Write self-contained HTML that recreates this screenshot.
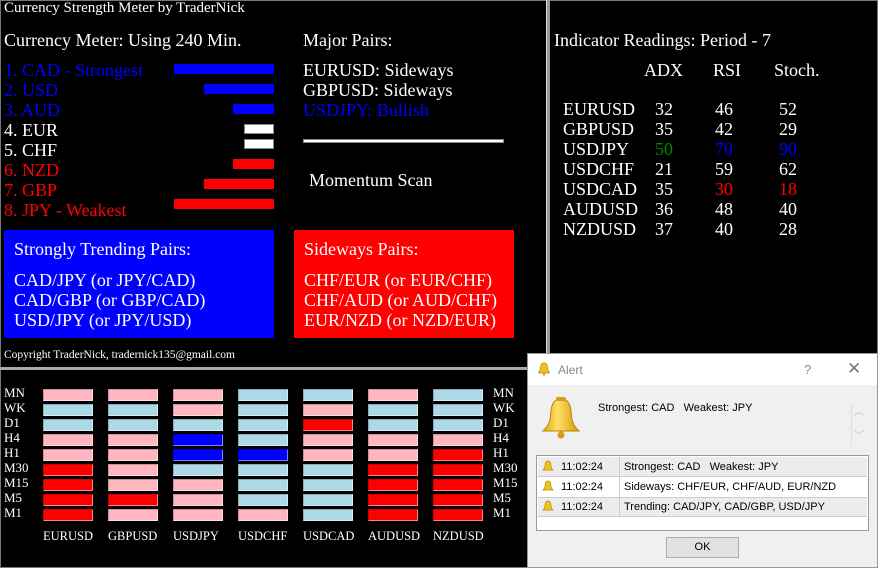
<!DOCTYPE html>
<html><head><meta charset="utf-8"><style>
*{margin:0;padding:0;box-sizing:border-box}
body{width:878px;height:568px;background:#000;position:relative;overflow:hidden;font-family:"Liberation Serif",serif;color:#fff}
.a{position:absolute;white-space:nowrap}
.t{font-size:18px;line-height:20px}
.b{position:absolute}
.g{position:absolute;width:50px;height:12px;border:1px solid rgba(0,0,0,.2);border-right-color:rgba(255,255,255,.5);border-bottom-color:rgba(255,255,255,.5)}
.p{background:#ffb6c1}.l{background:#add8e6}.r{background:#f00}.u{background:#00f}
.gl{position:absolute;font-size:13px;line-height:15px}
.dlg{position:absolute;left:527px;top:353px;width:351px;height:215px;background:#f0f0f0;border:1px solid #999;font-family:"Liberation Sans",sans-serif;font-size:11px;color:#000}
</style></head><body>
<div class="b" style="left:0;top:0;width:878px;height:568px;border:1px solid #777"></div>
<div class="b" style="left:546px;top:0;width:4px;height:370px;background:#999;border-left:1px solid #ddd"></div>
<div class="b" style="left:0;top:367px;width:548px;height:3px;background:#aaa"></div>

<div class="a" style="left:4px;top:0px;font-size:15px">Currency Strength Meter by TraderNick</div>
<div class="a t" style="left:4px;top:30px">Currency Meter: Using 240 Min.</div>
<div class="a t" style="left:303px;top:30px">Major Pairs:</div>

<div class="a t" style="left:4px;top:60px;color:#00f">1. CAD - Strongest</div>
<div class="a t" style="left:4px;top:80px;color:#00f">2. USD</div>
<div class="a t" style="left:4px;top:100px;color:#00f">3. AUD</div>
<div class="a t" style="left:4px;top:120px">4. EUR</div>
<div class="a t" style="left:4px;top:140px">5. CHF</div>
<div class="a t" style="left:4px;top:160px;color:#f00">6. NZD</div>
<div class="a t" style="left:4px;top:180px;color:#f00">7. GBP</div>
<div class="a t" style="left:4px;top:200px;color:#f00">8. JPY - Weakest</div>

<div class="b u" style="left:174px;top:64px;width:100px;height:10px"></div>
<div class="b u" style="left:204px;top:84px;width:70px;height:10px"></div>
<div class="b u" style="left:233px;top:104px;width:41px;height:10px"></div>
<div class="b" style="left:244px;top:124px;width:30px;height:10px;background:#fff;border:1px solid #888"></div>
<div class="b" style="left:244px;top:139px;width:30px;height:10px;background:#fff;border:1px solid #888"></div>
<div class="b r" style="left:233px;top:159px;width:41px;height:10px"></div>
<div class="b r" style="left:204px;top:179px;width:70px;height:10px"></div>
<div class="b r" style="left:174px;top:199px;width:100px;height:10px"></div>

<div class="a t" style="left:303px;top:60px">EURUSD: Sideways</div>
<div class="a t" style="left:303px;top:80px">GBPUSD: Sideways</div>
<div class="a t" style="left:303px;top:100px;color:#00f">USDJPY: Bullish</div>
<div class="b" style="left:303px;top:139px;width:201px;height:4px;background:#fff;border:1px solid #888"></div>
<div class="a t" style="left:309px;top:170px">Momentum Scan</div>

<div class="b u" style="left:4px;top:230px;width:270px;height:108px"></div>
<div class="a t" style="left:14px;top:239px">Strongly Trending Pairs:</div>
<div class="a t" style="left:14px;top:270px">CAD/JPY (or JPY/CAD)<br>CAD/GBP (or GBP/CAD)<br>USD/JPY (or JPY/USD)</div>
<div class="b r" style="left:294px;top:230px;width:220px;height:108px"></div>
<div class="a t" style="left:304px;top:239px">Sideways Pairs:</div>
<div class="a t" style="left:304px;top:270px">CHF/EUR (or EUR/CHF)<br>CHF/AUD (or AUD/CHF)<br>EUR/NZD (or NZD/EUR)</div>
<div class="a" style="left:4px;top:349px;font-size:11.5px">Copyright TraderNick, tradernick135@gmail.com</div>

<div class="a t" style="left:554px;top:30px">Indicator Readings: Period - 7</div>
<div class="a t" style="left:644px;top:60px">ADX</div>
<div class="a t" style="left:713px;top:60px">RSI</div>
<div class="a t" style="left:774px;top:60px">Stoch.</div>
<div class="a t" style="left:563px;top:99px">EURUSD<br>GBPUSD<br>USDJPY<br>USDCHF<br>USDCAD<br>AUDUSD<br>NZDUSD</div>
<div class="a t" style="left:655px;top:99px">32<br>35<br><span style="color:#080">50</span><br>21<br>35<br>36<br>37</div>
<div class="a t" style="left:715px;top:99px">46<br>42<br><span style="color:#00f">70</span><br>59<br><span style="color:#f00">30</span><br>48<br>40</div>
<div class="a t" style="left:779px;top:99px">52<br>29<br><span style="color:#00f">90</span><br>62<br><span style="color:#f00">18</span><br>40<br>28</div>

<div class="gl" style="left:4px;top:385px">MN<br>WK<br>D1<br>H4<br>H1<br>M30<br>M15<br>M5<br>M1</div>
<div class="gl" style="left:493px;top:385px">MN<br>WK<br>D1<br>H4<br>H1<br>M30<br>M15<br>M5<br>M1</div>

<div class="g p" style="left:43px;top:389px"></div><div class="g l" style="left:43px;top:404px"></div><div class="g l" style="left:43px;top:419px"></div><div class="g p" style="left:43px;top:434px"></div><div class="g p" style="left:43px;top:449px"></div><div class="g r" style="left:43px;top:464px"></div><div class="g r" style="left:43px;top:479px"></div><div class="g r" style="left:43px;top:494px"></div><div class="g r" style="left:43px;top:509px"></div>
<div class="g p" style="left:108px;top:389px"></div><div class="g l" style="left:108px;top:404px"></div><div class="g l" style="left:108px;top:419px"></div><div class="g p" style="left:108px;top:434px"></div><div class="g p" style="left:108px;top:449px"></div><div class="g p" style="left:108px;top:464px"></div><div class="g p" style="left:108px;top:479px"></div><div class="g r" style="left:108px;top:494px"></div><div class="g p" style="left:108px;top:509px"></div>
<div class="g p" style="left:173px;top:389px"></div><div class="g p" style="left:173px;top:404px"></div><div class="g l" style="left:173px;top:419px"></div><div class="g u" style="left:173px;top:434px"></div><div class="g u" style="left:173px;top:449px"></div><div class="g l" style="left:173px;top:464px"></div><div class="g p" style="left:173px;top:479px"></div><div class="g p" style="left:173px;top:494px"></div><div class="g p" style="left:173px;top:509px"></div>
<div class="g l" style="left:238px;top:389px"></div><div class="g l" style="left:238px;top:404px"></div><div class="g l" style="left:238px;top:419px"></div><div class="g l" style="left:238px;top:434px"></div><div class="g u" style="left:238px;top:449px"></div><div class="g l" style="left:238px;top:464px"></div><div class="g l" style="left:238px;top:479px"></div><div class="g l" style="left:238px;top:494px"></div><div class="g p" style="left:238px;top:509px"></div>
<div class="g l" style="left:303px;top:389px"></div><div class="g p" style="left:303px;top:404px"></div><div class="g r" style="left:303px;top:419px"></div><div class="g p" style="left:303px;top:434px"></div><div class="g p" style="left:303px;top:449px"></div><div class="g l" style="left:303px;top:464px"></div><div class="g l" style="left:303px;top:479px"></div><div class="g l" style="left:303px;top:494px"></div><div class="g l" style="left:303px;top:509px"></div>
<div class="g p" style="left:368px;top:389px"></div><div class="g l" style="left:368px;top:404px"></div><div class="g l" style="left:368px;top:419px"></div><div class="g p" style="left:368px;top:434px"></div><div class="g p" style="left:368px;top:449px"></div><div class="g r" style="left:368px;top:464px"></div><div class="g r" style="left:368px;top:479px"></div><div class="g r" style="left:368px;top:494px"></div><div class="g r" style="left:368px;top:509px"></div>
<div class="g l" style="left:433px;top:389px"></div><div class="g l" style="left:433px;top:404px"></div><div class="g l" style="left:433px;top:419px"></div><div class="g p" style="left:433px;top:434px"></div><div class="g r" style="left:433px;top:449px"></div><div class="g r" style="left:433px;top:464px"></div><div class="g r" style="left:433px;top:479px"></div><div class="g r" style="left:433px;top:494px"></div><div class="g r" style="left:433px;top:509px"></div>

<div class="gl" style="left:43px;top:529px;font-size:12.5px">EURUSD</div>
<div class="gl" style="left:108px;top:529px;font-size:12.5px">GBPUSD</div>
<div class="gl" style="left:173px;top:529px;font-size:12.5px">USDJPY</div>
<div class="gl" style="left:238px;top:529px;font-size:12.5px">USDCHF</div>
<div class="gl" style="left:303px;top:529px;font-size:12.5px">USDCAD</div>
<div class="gl" style="left:368px;top:529px;font-size:12.5px">AUDUSD</div>
<div class="gl" style="left:433px;top:529px;font-size:12.5px">NZDUSD</div>

<div class="dlg">
 <div style="position:absolute;left:0;top:0;width:349px;height:31px;background:#fff"></div>
 <svg style="position:absolute;left:9px;top:8px" width="14" height="14" viewBox="0 0 14 14"><path d="M7 1C4 1 3.5 4 3.5 6.5 3.5 9 2 10 1.5 11H12.5C12 10 10.5 9 10.5 6.5 10.5 4 10 1 7 1Z" fill="#f0c419" stroke="#b8860b" stroke-width=".8"/><circle cx="7" cy="12.5" r="1.2" fill="#d4a017"/></svg>
 <div class="a" style="left:30px;top:9px;font-size:12px;color:#888">Alert</div>
 <div class="a" style="left:276px;top:8px;font-size:13px;color:#888">?</div>
 <div class="a" style="left:319px;top:5px;font-size:17px;color:#777">✕</div>
 <svg style="position:absolute;left:13px;top:42px" width="40" height="44" viewBox="0 0 40 44"><defs><linearGradient id="bg" x1="0" x2="1"><stop offset="0" stop-color="#e0a800"/><stop offset=".4" stop-color="#ffe066"/><stop offset="1" stop-color="#d49a00"/></linearGradient></defs><path d="M20 3C11 3 10 12 9.5 20 9 28 5 32 2 35H38C35 32 31 28 30.5 20 30 12 29 3 20 3Z" fill="url(#bg)" stroke="#b8860b"/><rect x="15" y="1" width="10" height="4" rx="2" fill="#d4a017"/><circle cx="20" cy="39" r="3.5" fill="#d4a017"/></svg>
 <div class="a" style="left:70px;top:48px">Strongest: CAD&nbsp;&nbsp; Weakest: JPY</div>
 <div class="a" style="left:326px;top:49px;color:#bbb;font-size:10px">︿</div>
 <div class="a" style="left:326px;top:73px;color:#bbb;font-size:10px">﹀</div>
 <div style="position:absolute;left:323px;top:50px;width:1px;height:42px;background:#ddd"></div>
 <div style="position:absolute;left:8px;top:101px;width:333px;height:76px;border:1px solid #999;background:#fff">
  <div style="position:absolute;left:1px;top:1px;width:329px;height:20px;background:#ececec;border-bottom:1px solid #ccc"></div>
  <div style="position:absolute;left:1px;top:41px;width:329px;height:20px;background:#ececec;border-bottom:1px solid #ccc;border-top:1px solid #ccc"></div>
  <div style="position:absolute;left:82px;top:1px;width:1px;height:60px;background:#ccc"></div>
  <div class="a" style="left:24px;top:1px;line-height:20px">11:02:24<br>11:02:24<br>11:02:24</div>
  <div class="a" style="left:87px;top:1px;line-height:20px">Strongest: CAD&nbsp;&nbsp; Weakest: JPY<br>Sideways: CHF/EUR, CHF/AUD, EUR/NZD<br>Trending: CAD/JPY, CAD/GBP, USD/JPY</div>
  <svg style="position:absolute;left:5px;top:4px" width="12" height="56" viewBox="0 0 12 56"><g fill="#f0c419" stroke="#b8860b" stroke-width=".7"><path d="M6 1C3.5 1 3 3.5 3 6 3 8 2 9 1 10H11C10 9 9 8 9 6 9 3.5 8.5 1 6 1Z"/><path transform="translate(0,20)" d="M6 1C3.5 1 3 3.5 3 6 3 8 2 9 1 10H11C10 9 9 8 9 6 9 3.5 8.5 1 6 1Z"/><path transform="translate(0,40)" d="M6 1C3.5 1 3 3.5 3 6 3 8 2 9 1 10H11C10 9 9 8 9 6 9 3.5 8.5 1 6 1Z"/></g></svg>
 </div>
 <div style="position:absolute;left:138px;top:183px;width:73px;height:21px;background:#e1e1e1;border:1px solid #adadad;text-align:center;line-height:19px">OK</div>
</div>
</body></html>
